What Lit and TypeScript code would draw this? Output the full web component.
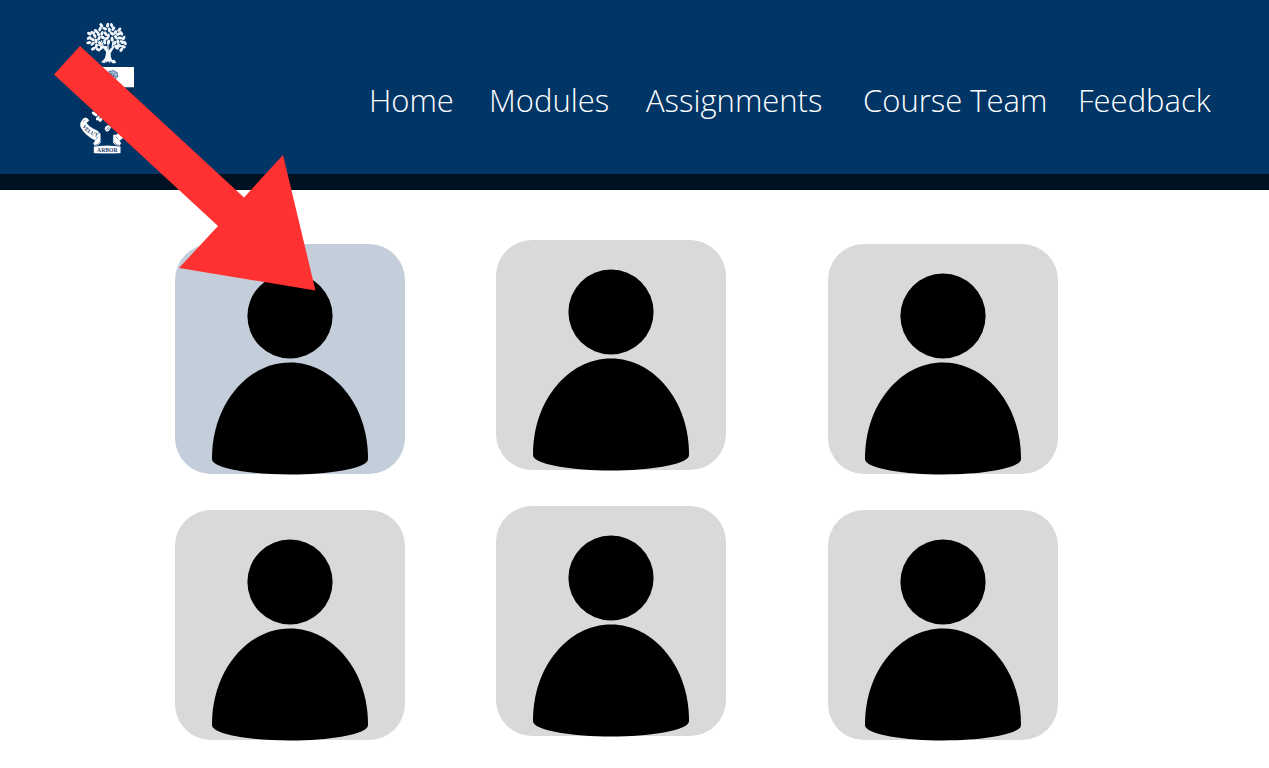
import { LitElement, html, svg, css } from "lit";
import { customElement, property } from "lit/decorators.js";

// Leaves of the crest's tree: x, y, angle
const leaves: number[][] = [
  [124, 46, 50], [134, 56, 20], [120, 57, 110], [143, 46, 100], [155, 46, 70], [160, 56, 130],
  [148, 60, 80], [108, 63, 40], [98, 68, 10], [104, 77, 60], [88, 71, 30], [87, 84, 150],
  [97, 88, 20], [86, 98, 170], [98, 101, 140], [108, 93, 80], [115, 72, 70], [126, 70, 110],
  [137, 71, 60], [128, 82, 30], [117, 85, 120], [145, 78, 100], [156, 71, 40], [166, 67, 120],
  [178, 59, 130], [175, 72, 160], [184, 70, 60], [168, 82, 50], [156, 87, 90], [180, 84, 10],
  [191, 84, 120], [186, 96, 40], [174, 95, 80], [195, 99, 60], [164, 99, 130], [190, 110, 20],
  [177, 108, 160], [120, 100, 50], [109, 108, 100], [100, 116, 150], [124, 113, 120],
  [134, 96, 80], [114, 119, 20], [146, 96, 100], [170, 113, 30], [184, 119, 130], [139, 86, 150],
];

@customElement("person-card")
export class PersonCard extends LitElement {
  @property({ type: Boolean, reflect: true }) selected = false;

  static styles = css`
    :host { display: block; }
    .card {
      display: block;
      width: 230px;
      padding: 0;
      border: 0;
      border-radius: 36px;
      background: #d9d9d9;
      cursor: pointer;
    }
    :host([selected]) .card { background: #c4cdda; }
    .figure { display: block; width: 100%; overflow: visible; }
  `;

  render() {
    return html`
      <button class="card" type="button" aria-label="Team member" aria-pressed=${this.selected}>
        <svg class="figure" viewBox="0 0 230 230" aria-hidden="true">
          <circle cx="115" cy="72" r="42.6" />
          <path d="M37 214C37 161 72 118.500 115 118.500S193 161 193 214C193 215 193 216 192.500 217C187 225 154 230.500 115 230.500S43 225 37.500 217C37 216 37 215 37 214Z" />
        </svg>
      </button>
    `;
  }
}

@customElement("app-root")
export class AppRoot extends LitElement {
  static styles = css`
    :host {
      display: block;
      position: relative;
      min-height: 100vh;
      overflow: hidden;
      background: #fff;
      font-family: "Open Sans", "Noto Sans", sans-serif;
    }
    .header {
      display: flex;
      box-sizing: border-box;
      height: 190px;
      padding: 20px 54px 0 78px;
      border-bottom: 16px solid #001222;
      background: #003566;
      color: #fff;
    }
    .logo { flex: none; width: 58px; height: 136px; }
    .motto { font: 700 17px "Liberation Serif", serif; fill: #1f4371; }
    .nav {
      flex: 1;
      display: grid;
      grid-template-columns: 120fr 157fr 217fr 215fr 137fr;
      align-content: start;
      margin-left: 233px;
      padding-top: 60px;
    }
    .link {
      color: inherit;
      font-size: 31px;
      font-weight: 350;
      line-height: 40px;
      text-decoration: none;
      white-space: nowrap;
    }
    .people {
      display: grid;
      grid-template-columns: 321fr 332fr 230fr;
      padding: 50px 211px 28px 175px;
    }
    .column { display: grid; gap: 36px; align-content: start; padding-top: 4px; }
    .raised { padding-top: 0; }
    .arrow {
      position: absolute;
      top: 46px;
      left: 54px;
      width: 262px;
      height: 245px;
      pointer-events: none;
    }
  `;

  private crest() {
    return html`
      <svg class="logo" viewBox="54 30 174 408" role="img" aria-label="Velut Arbor crest">
        <path d="M60 232H222V290Q220 350 142 394Q64 350 60 290Z" fill="#002f5e" />
        <g fill="#f4f7fb">
          ${leaves.map(([x, y, a]) => svg`<ellipse cx=${x} cy=${y} rx="7.500" ry="4.500" transform="rotate(${a} ${x} ${y})" />`)}
          <path d="M130 108L138 127Q137 144 130 151L124 156 131 156 138 152 136 160 143 154 151 160 149 152 158 160 167 160 157 151Q151 143 152 130L162 113 153 114 145 123 140 108Z" />
          <path d="M124 157L131 149 139 151 133 160ZM155 151L163 149 169 158 160 160Z" />
        </g>
        <g fill="none" stroke="#f4f7fb" stroke-width="3.500">
          <path d="M143 126L126 109 110 103M132 115L124 91M145 125L143 92M147 128L162 109 178 103M156 115L160 88" />
        </g>
        <path d="M105 171H222V232H105Z" fill="#fff" />
        <g fill="#aebfd2" stroke="#45699a" stroke-width="3">
          <path d="M144 188q4-8 10-4q7-6 11 1q9 1 7 9q5 7-3 10l-6 3l-8-4z" />
          <path d="M148 188q7 3 3 8M156 188q-4 6 2 10M165 190q-7 3-4 9M151 201l8 7M169 199q-8-3-10 3" fill="none" />
        </g>
        <g fill="#fff">
          <ellipse cx="104" cy="312" rx="10" ry="4.500" transform="rotate(38 104 312)" />
          <path d="M108 324l11-9 2 4-5 7q10-5 13-3-2 10-10 14l-2-5-9-2z" />
          <path d="M134 357Q136 346 146 346L153 352Q151 362 141 365Q136 364 134 357Z" />
        </g>
        <path d="M139 360l9-9M145 360l5-5" stroke="#003566" stroke-width="2" />
        <g fill="#fff" stroke="#f4f7fb" stroke-linejoin="round">
          <path d="M71 325Q76 320 84 327L87 332 79 338Q87 352 112 362L121 372V398Q116 407 105 407L100 401 106 391Q74 376 62 351Q58 338 71 325Z" />
          <path d="M180 364L170 374 160 375V398Q166 407 178 407L183 400 178 392Q190 386 196 374Z" />
          <path d="M102 410Q142 405 181 410V429Q142 431 102 429Z" />
        </g>
        <path d="M76 329l-7 5M107 388l8-8M175 388l-8-8M105 406q11 0 14-9M178 406q-11 0-14-9" fill="none" stroke="#35547d" stroke-width="2" />
        <path id="ribbon" d="M66 349Q80 374 116 382" fill="none" />
        <text class="motto"><textPath href="#ribbon">VELUT</textPath></text>
        <text class="motto" x="142" y="426" text-anchor="middle">ARBOR</text>
      </svg>
    `;
  }

  private column(raised: boolean, selected = false) {
    return html`
      <div class="column ${raised ? "raised" : ""}">
        <person-card ?selected=${selected}></person-card>
        <person-card></person-card>
      </div>
    `;
  }

  render() {
    return html`
      <header class="header">
        ${this.crest()}
        <nav class="nav">
          ${["Home", "Modules", "Assignments", "Course Team", "Feedback"].map(
            (name) => html`<a class="link" href="#">${name}</a>`,
          )}
        </nav>
      </header>
      <main class="people">
        ${this.column(false, true)} ${this.column(true)} ${this.column(false)}
      </main>
      <svg class="arrow" viewBox="0 0 262 245" aria-hidden="true">
        <path d="M26 0L190 151.500 229 109 261.500 244.500 125 222 164 180 0 28.500Z" fill="#ff3131" />
      </svg>
    `;
  }
}
